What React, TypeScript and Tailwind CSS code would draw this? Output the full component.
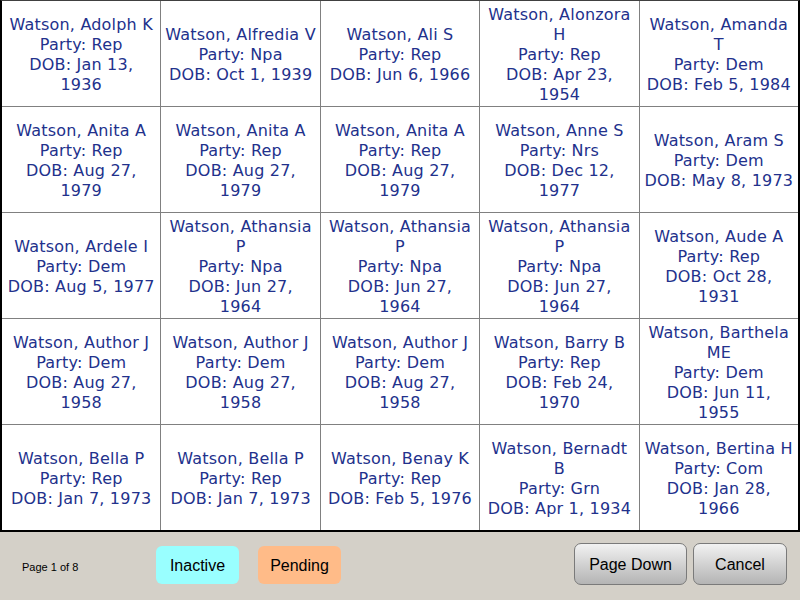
import React from "react";

const cells: string[][] = [
  ["Watson, Adolph K", "Party: Rep", "DOB: Jan 13,", "1936"],
  ["Watson, Alfredia V", "Party: Npa", "DOB: Oct 1, 1939"],
  ["Watson, Ali S", "Party: Rep", "DOB: Jun 6, 1966"],
  ["Watson, Alonzora", "H", "Party: Rep", "DOB: Apr 23,", "1954"],
  ["Watson, Amanda", "T", "Party: Dem", "DOB: Feb 5, 1984"],
  ["Watson, Anita A", "Party: Rep", "DOB: Aug 27,", "1979"],
  ["Watson, Anita A", "Party: Rep", "DOB: Aug 27,", "1979"],
  ["Watson, Anita A", "Party: Rep", "DOB: Aug 27,", "1979"],
  ["Watson, Anne S", "Party: Nrs", "DOB: Dec 12,", "1977"],
  ["Watson, Aram S", "Party: Dem", "DOB: May 8, 1973"],
  ["Watson, Ardele I", "Party: Dem", "DOB: Aug 5, 1977"],
  ["Watson, Athansia", "P", "Party: Npa", "DOB: Jun 27,", "1964"],
  ["Watson, Athansia", "P", "Party: Npa", "DOB: Jun 27,", "1964"],
  ["Watson, Athansia", "P", "Party: Npa", "DOB: Jun 27,", "1964"],
  ["Watson, Aude A", "Party: Rep", "DOB: Oct 28,", "1931"],
  ["Watson, Author J", "Party: Dem", "DOB: Aug 27,", "1958"],
  ["Watson, Author J", "Party: Dem", "DOB: Aug 27,", "1958"],
  ["Watson, Author J", "Party: Dem", "DOB: Aug 27,", "1958"],
  ["Watson, Barry B", "Party: Rep", "DOB: Feb 24,", "1970"],
  ["Watson, Barthela", "ME", "Party: Dem", "DOB: Jun 11,", "1955"],
  ["Watson, Bella P", "Party: Rep", "DOB: Jan 7, 1973"],
  ["Watson, Bella P", "Party: Rep", "DOB: Jan 7, 1973"],
  ["Watson, Benay K", "Party: Rep", "DOB: Feb 5, 1976"],
  ["Watson, Bernadt", "B", "Party: Grn", "DOB: Apr 1, 1934"],
  ["Watson, Bertina H", "Party: Com", "DOB: Jan 28,", "1966"],
];

export default function App() {
  return (
    <div className="w-[800px] h-[600px] flex flex-col bg-[#d4d0c8] overflow-hidden">
      <div className="h-[532px] border-l-2 border-r-2 border-b-2 border-t border-black border-t-[#404040] bg-[#808080]">
        <div className="grid grid-cols-5 grid-rows-5 gap-px h-full">
          {cells.map((lines, i) => (
            <div
              key={i}
              className="bg-white pt-[2px] flex flex-col items-center justify-center text-[#22318c] text-[16px] leading-[20px] tracking-[0.2px] font-['DejaVu_Sans',sans-serif]"
            >
              {lines.map((l, j) => (
                <div key={j} className="whitespace-nowrap">
                  {l}
                </div>
              ))}
            </div>
          ))}
        </div>
      </div>
      <div className="flex-1 flex items-start font-['Liberation_Sans',Arial,sans-serif]">
        <div className="w-[134px] ml-[22px] mt-[28px] text-[11px] leading-[14px] text-black">
          Page 1 of 8
        </div>
        <div className="mt-[14px] pt-[1px] w-[83px] h-[38px] rounded-[6px] bg-[#99ffff] flex items-center justify-center text-[16px] text-black">
          Inactive
        </div>
        <div className="mt-[14px] pt-[1px] ml-[19px] w-[83px] h-[38px] rounded-[6px] bg-[#ffbb88] flex items-center justify-center text-[16px] text-black">
          Pending
        </div>
        <div className="ml-auto mt-[11px] pt-[1px] w-[113px] h-[42px] rounded-[7px] border border-[#7a7a7a] bg-gradient-to-b from-[#f2f2f2] to-[#b4b4b4] flex items-center justify-center text-[16px] text-black">
          Page Down
        </div>
        <div className="ml-[6px] mr-[13px] mt-[11px] pt-[1px] w-[94px] h-[42px] rounded-[7px] border border-[#7a7a7a] bg-gradient-to-b from-[#f2f2f2] to-[#b4b4b4] flex items-center justify-center text-[16px] text-black">
          Cancel
        </div>
      </div>
    </div>
  );
}
